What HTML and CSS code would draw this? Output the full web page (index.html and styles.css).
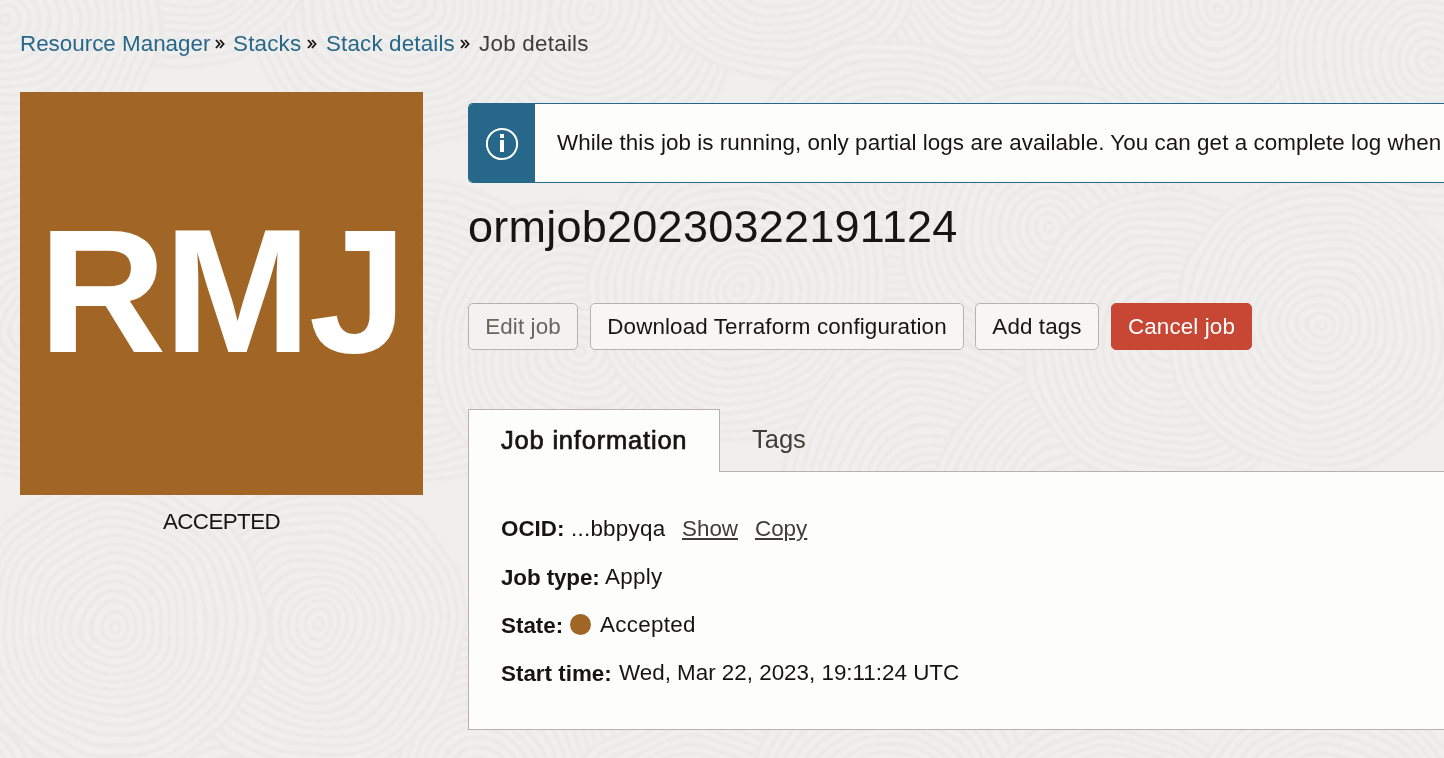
FILE: index.html
```html
<!DOCTYPE html>
<html lang="en">
<head>
<meta charset="utf-8">
<title>Job details</title>
<link rel="stylesheet" href="styles.css">
</head>
<body>
<svg class="texture" width="1444" height="758" viewBox="0 0 1444 758" aria-hidden="true">
  <defs>
    <filter id="organic" filterUnits="userSpaceOnUse" x="-20" y="-20" width="1484" height="798" color-interpolation-filters="sRGB">
      <feTurbulence type="fractalNoise" baseFrequency="0.012" numOctaves="2" seed="4" result="noise"/>
      <feDisplacementMap in="SourceGraphic" in2="noise" scale="18" xChannelSelector="R" yChannelSelector="G"/>
      <feGaussianBlur stdDeviation="1.2"/>
    </filter>
    <g id="rings">
      <circle r="151" fill="#f0efee" stroke="none"/>
      <circle r="5"/><circle r="14"/><circle r="23"/><circle r="32"/><circle r="41"/><circle r="50"/><circle r="59"/><circle r="68"/><circle r="77"/><circle r="86"/><circle r="95"/><circle r="104"/><circle r="113"/><circle r="122"/><circle r="131"/><circle r="140"/><circle r="149"/>
    </g>
  </defs>
  <g class="ring-lines" filter="url(#organic)">
    <use href="#rings" x="40" y="330"/><use href="#rings" x="420" y="330"/><use href="#rings" x="980" y="-20"/><use href="#rings" x="1220" y="10"/>
    <use href="#rings" x="590" y="10"/><use href="#rings" x="780" y="-70"/><use href="#rings" x="400" y="0"/><use href="#rings" x="180" y="-80"/>
    <use href="#rings" x="10" y="20"/><use href="#rings" x="1430" y="60"/><use href="#rings" x="890" y="190"/><use href="#rings" x="1050" y="230"/>
    <use href="#rings" x="580" y="350"/><use href="#rings" x="740" y="290"/><use href="#rings" x="930" y="490"/><use href="#rings" x="1080" y="510"/>
    <use href="#rings" x="1170" y="340"/><use href="#rings" x="1320" y="325"/><use href="#rings" x="-60" y="800"/><use href="#rings" x="240" y="850"/>
    <use href="#rings" x="480" y="780"/><use href="#rings" x="315" y="625"/><use href="#rings" x="115" y="625"/><use href="#rings" x="690" y="860"/><use href="#rings" x="890" y="820"/><use href="#rings" x="1110" y="860"/><use href="#rings" x="1330" y="840"/>
  </g>
</svg>
<div class="page">
  <nav class="breadcrumb">
    <a class="crumb crumb-manager">Resource Manager</a>
    <svg class="sep" viewBox="0 0 10 10"><path d="M1 1l3.6 4L1 9M5 1l3.6 4L5 9"/></svg>
    <a class="crumb crumb-stacks">Stacks</a>
    <svg class="sep" viewBox="0 0 10 10"><path d="M1 1l3.6 4L1 9M5 1l3.6 4L5 9"/></svg>
    <a class="crumb crumb-stack">Stack details</a>
    <svg class="sep" viewBox="0 0 10 10"><path d="M1 1l3.6 4L1 9M5 1l3.6 4L5 9"/></svg>
    <span class="crumb current">Job details</span>
  </nav>
  <div class="content">
    <aside class="status">
      <div class="badge"><span>RMJ</span></div>
      <div class="status-text">ACCEPTED</div>
    </aside>
    <main class="details">
      <div class="notice">
        <div class="notice-icon">
          <svg width="34" height="34" viewBox="0 0 34 34"><circle cx="17" cy="17" r="15.1" fill="none" stroke="#fff" stroke-width="2"/><path fill="#fff" d="M15 7h4v4h-4zM15 13h4v12h-4z"/></svg>
        </div>
        <div class="notice-text">While this job is running, only partial logs are available. You can get a complete log when</div>
      </div>
      <h1 class="title">ormjob20230322191124</h1>
      <div class="actions">
        <button class="btn btn-edit" disabled>Edit job</button>
        <button class="btn btn-download">Download Terraform configuration</button>
        <button class="btn btn-tags">Add tags</button>
        <button class="btn btn-cancel">Cancel job</button>
      </div>
      <div class="tabs">
        <div class="tab active"><span>Job information</span></div>
        <div class="tab"><span>Tags</span></div>
      </div>
      <section class="panel">
        <div class="row"><b class="k-ocid">OCID:</b><span class="ocid">...bbpyqa</span><a class="show">Show</a><a class="copy">Copy</a></div>
        <div class="row"><b class="k-type">Job type:</b><span class="v-type">Apply</span></div>
        <div class="row"><b class="k-state">State:</b><i class="dot"></i><span class="v-state">Accepted</span></div>
        <div class="row"><b class="k-start">Start time:</b><span class="v-start">Wed, Mar 22, 2023, 19:11:24 UTC</span></div>
      </section>
    </main>
  </div>
</div>
</body>
</html>
```
FILE: styles.css
```css
* { box-sizing: border-box; }
body {
  margin: 0;
  width: 1444px;
  height: 758px;
  overflow: hidden;
  background: #f0efee;
  color: #161513;
  font: 22.4px/26px "Liberation Sans", Arial, sans-serif;
}
.texture { position: absolute; inset: 0; z-index: -1; }
.ring-lines { fill: none; stroke: #e9e8e7; stroke-width: 3; }
.page { padding-left: 20px; white-space: nowrap; }
.breadcrumb { display: flex; align-items: center; height: 92px; padding-bottom: 5px; color: #403c38; }
.crumb-manager { width: 195px; }
.crumb-stacks { width: 74px; letter-spacing: .2px; }
.crumb-stack { width: 135px; padding-left: 1px; letter-spacing: .15px; }
.current { padding-left: 1px; letter-spacing: .25px; }
a.crumb { color: #276789; }
.sep { width: 10px; height: 10px; flex: none; margin-right: 8px; fill: none; stroke: #161513; stroke-width: 1.8; }
.content { display: flex; gap: 45px; }
.status { width: 403px; flex: none; }
.badge { height: 403px; padding-bottom: 5px; background: #a16626; color: #fff; display: flex; justify-content: center; align-items: center; font-size: 177px; font-weight: bold; line-height: 200px; letter-spacing: -2.5px; }
.status-text { margin-top: 14px; text-align: center; letter-spacing: -.6px; }
.details { flex: 1; min-width: 0; padding-top: 11px; }
.notice { display: flex; height: 80px; border: 1px solid #276789; border-right: 0; border-radius: 5px 0 0 5px; background: #fdfdfc; overflow: hidden; }
.notice-icon { width: 66px; background: #276789; display: flex; align-items: center; justify-content: center; flex: none; padding-top: 2px; }
.notice-text { padding: 26px 0 0 22px; letter-spacing: .06px; }
.title { margin: 17px 0 0; height: 54px; font-size: 45px; font-weight: normal; line-height: 54px; letter-spacing: .25px; }
.actions { display: flex; margin-top: 49px; }
.btn { height: 47px; padding: 0; border: 1px solid #b6b3af; border-radius: 5px; background: #f7f6f5; color: #161513; font: inherit; letter-spacing: .12px; }
.btn-edit { width: 110px; margin-right: 12px; background: #f3f2f0; color: #6b6560; }
.btn-download { width: 374px; margin-right: 11px; }
.btn-tags { width: 124px; margin-right: 12px; }
.btn-cancel { width: 141px; background: #c74634; border-color: #c74634; color: #fff; }
.tabs { display: flex; margin-top: 59px; height: 63px; }
.tab { padding: 16px 32px 0; font-size: 25.5px; line-height: 28px; color: #403c38; }
.tab.active { width: 252px; background: #fdfdfc; border: 1px solid #b6b3af; border-bottom: 0; color: #161513; letter-spacing: .8px; -webkit-text-stroke: .7px #161513; z-index: 1; }
.panel { height: 259px; margin-top: -1px; padding: 33px 0 0 32px; border: 1px solid #b6b3af; border-right: 0; background: #fdfdfc; }
.row { display: flex; align-items: center; height: 48px; }
.row b { padding-top: 1px; }
.row .k-ocid { width: 70px; padding-top: 0; }
.k-type { width: 104px; letter-spacing: -.1px; }
.k-state { width: 69px; }
.k-start { width: 117px; }
.ocid { width: 111px; letter-spacing: .25px; }
.v-type, .v-state { letter-spacing: .3px; }
.v-start { padding-left: 1px; }
.show, .copy { color: #403c38; text-decoration: underline; text-decoration-thickness: 2px; text-underline-offset: 2px; }
.show { width: 73px; }
.dot { width: 21px; height: 21px; margin: 0 9px 2px 0; border-radius: 50%; background: #a16626; }
```
